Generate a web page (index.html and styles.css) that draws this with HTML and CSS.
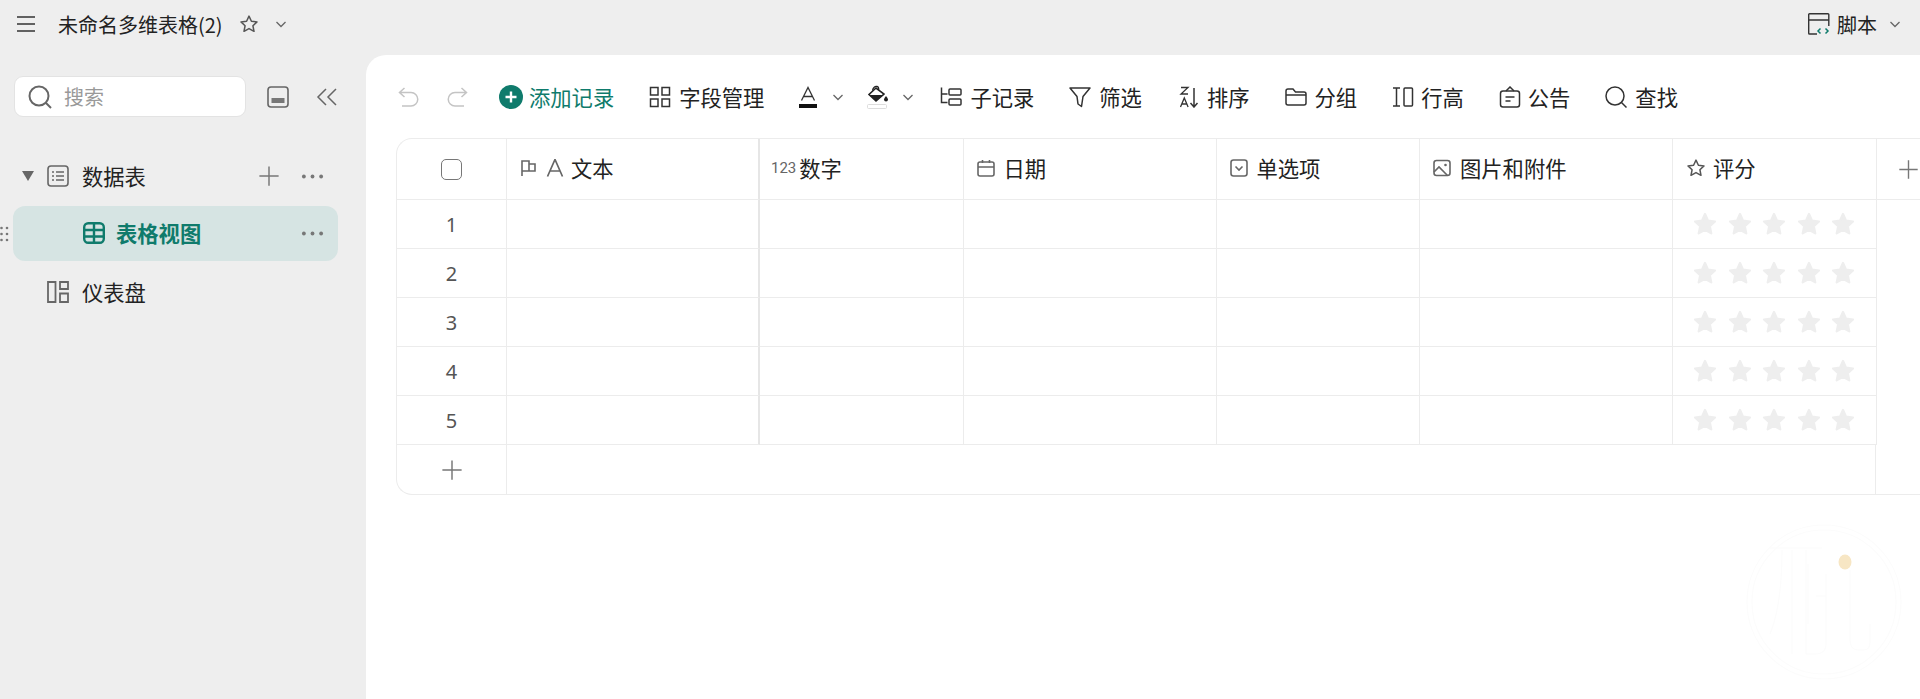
FILE: index.html
```html
<!DOCTYPE html>
<html lang="zh-CN">
<head>
<meta charset="utf-8">
<title>未命名多维表格(2)</title>
<link rel="stylesheet" href="styles.css">
</head>
<body>
<svg class="defs" width="0" height="0" aria-hidden="true">
  <symbol id="star" viewBox="0 0 24 24"><path d="M12 2l3 6.700 7 .8-5.200 4.800 1.500 7.100-6.300-3.600-6.300 3.600 1.500-7.100L2 9.500l7-.8z" fill="#eeeeee" stroke="#eeeeee" stroke-width="2.200" stroke-linejoin="round"/></symbol>
  <symbol id="chev" viewBox="0 0 12 12"><path d="M1.500 4l4.500 4.500L10.500 4" fill="none" stroke="#666" stroke-width="1.300"/></symbol>
  <symbol id="dots" viewBox="0 0 24 24"><circle cx="3" cy="12" r="2" fill="#777"/><circle cx="12" cy="12" r="2" fill="#777"/><circle cx="21" cy="12" r="2" fill="#777"/></symbol>
  <symbol id="plus" viewBox="0 0 24 24"><path d="M12 1.500v21M1.500 12h21" fill="none" stroke="#777" stroke-width="1.600"/></symbol>
  <symbol id="staro" viewBox="0 0 24 24"><path d="M12 2.500l2.900 6.200 6.700.8-4.900 4.600 1.300 6.700L12 17.500l-6 3.300 1.300-6.700-4.900-4.600 6.700-.8z" fill="none" stroke="#555" stroke-width="1.800" stroke-linejoin="round"/></symbol>
</svg>

<header class="topbar">
  <svg class="ic-menu" viewBox="0 0 18 16"><path d="M0 1h18M0 8h18M0 15h18" stroke="#333" stroke-width="1.500" fill="none"/></svg>
  <span class="doc-title">未命名多维表格(2)</span>
  <svg class="ic-star" viewBox="0 0 24 24"><use href="#staro"/></svg>
  <svg class="ic-chev top-chev" viewBox="0 0 12 12"><use href="#chev"/></svg>
  <div class="script">
    <svg class="ic-script" viewBox="0 0 22 22">
      <path d="M9 21H1.500a.8.8 0 0 1-.8-.8V1.500A.8.8 0 0 1 1.500.7h18.500a.8.8 0 0 1 .8.8V13M.7 7h20" fill="none" stroke="#333" stroke-width="1.400"/>
      <path d="M12.500 15.500L10 18l2.500 2.500M17.500 15.500L20 18l-2.500 2.500" fill="none" stroke="#0f7b6c" stroke-width="1.500"/>
    </svg>
    <span>脚本</span>
    <svg class="ic-chev" viewBox="0 0 12 12"><use href="#chev"/></svg>
  </div>
</header>

<div class="body">
  <aside class="sidebar">
    <div class="search-row">
      <div class="search">
        <svg class="ic-search" viewBox="0 0 24 24"><circle cx="11" cy="11" r="9.500" fill="none" stroke="#666" stroke-width="2"/><path d="M18 18l5 5" stroke="#666" stroke-width="2"/></svg>
        <span>搜索</span>
      </div>
      <svg class="ic-panel" viewBox="0 0 22 22"><rect x="1" y="1" width="20" height="20" rx="3" fill="none" stroke="#666" stroke-width="1.600"/><rect x="4.500" y="12" width="13" height="5" fill="#777"/></svg>
      <svg class="ic-collapse" viewBox="0 0 22 18"><path d="M10 1L2 9l8 8M20 1l-8 8 8 8" fill="none" stroke="#666" stroke-width="1.500"/></svg>
    </div>
    <nav class="tree">
      <div class="tree-row">
        <svg class="ic-caret" viewBox="0 0 12 10"><path d="M0 0h12L6 10z" fill="#666"/></svg>
        <svg class="ic-tree" viewBox="0 0 22 22"><rect x="1" y="1" width="20" height="20" rx="3" fill="none" stroke="#666" stroke-width="1.600"/><path d="M9 7h8M9 11h8M9 15h8M5 7h2M5 11h2M5 15h2" stroke="#666" stroke-width="1.600"/></svg>
        <span class="tree-label">数据表</span>
        <svg class="ic-plus" viewBox="0 0 24 24"><use href="#plus"/></svg>
        <svg class="ic-dots" viewBox="0 0 24 24"><use href="#dots"/></svg>
      </div>
      <div class="tree-row active">
        <svg class="handle" viewBox="0 0 9 16"><g fill="#777"><circle cx="1.500" cy="2" r="1.300"/><circle cx="7" cy="2" r="1.300"/><circle cx="1.500" cy="8" r="1.300"/><circle cx="7" cy="8" r="1.300"/><circle cx="1.500" cy="14" r="1.300"/><circle cx="7" cy="14" r="1.300"/></g></svg>
        <svg class="ic-tree" viewBox="0 0 22 22"><rect x="1.200" y="1.200" width="19.600" height="19.600" rx="4" fill="none" stroke="#0f7b6c" stroke-width="2.400"/><path d="M1 8h20M1 14.500h20M11 1v20" stroke="#0f7b6c" stroke-width="2.400"/></svg>
        <span class="tree-label">表格视图</span>
        <svg class="ic-dots" viewBox="0 0 24 24"><use href="#dots"/></svg>
      </div>
      <div class="tree-row plain">
        <svg class="ic-tree" viewBox="0 0 22 22"><path d="M1 1h7.500v20H1zM13 1h8v7h-8zM13 12.500h8V21h-8z" fill="none" stroke="#666" stroke-width="1.800"/></svg>
        <span class="tree-label">仪表盘</span>
      </div>
    </nav>
  </aside>

  <main class="main">
    <div class="toolbar">
      <div class="history">
        <svg class="ic-tool" viewBox="0 0 22 22"><path d="M6.500 2L1.500 6.500l5 4.500M2 6.500h11a6.500 6.500 0 0 1 0 13.500H4" fill="none" stroke="#c4c4c4" stroke-width="1.500"/></svg>
        <svg class="ic-tool" viewBox="0 0 22 22"><path d="M15.500 2l5 4.500-5 4.500M20 6.500H9A6.500 6.500 0 0 0 9 20h9" fill="none" stroke="#c4c4c4" stroke-width="1.500"/></svg>
      </div>
      <div class="tool add">
        <svg class="ic-add" viewBox="0 0 24 24"><circle cx="12" cy="12" r="12" fill="#0f7b6c"/><path d="M12 6.500v11M6.500 12h11" stroke="#fff" stroke-width="2.400"/></svg>
        <span>添加记录</span>
      </div>
      <div class="tool">
        <svg class="ic-tool" viewBox="0 0 22 22"><path d="M1.500 1.500h7.500V9H1.500zM13 1.500h7.500V9H13zM1.500 13H9v7.500H1.500zM13 13h7.500v7.500H13z" fill="none" stroke="#333" stroke-width="1.500"/></svg>
        <span>字段管理</span>
      </div>
      <div class="tool swatch first">
        <svg class="ic-tool" viewBox="0 0 22 22"><path d="M4.500 14.500L11 1.500l6.500 13M6.500 10.500h9" fill="none" stroke="#333" stroke-width="1.300"/><rect x="2" y="18" width="18" height="4" fill="#111"/></svg>
        <svg class="ic-chev" viewBox="0 0 12 12"><use href="#chev"/></svg>
      </div>
      <div class="tool swatch second">
        <svg class="ic-bucket" viewBox="0 0 22 24"><path d="M9 3l-7 6.500 7 6.500 8-7z" fill="none" stroke="#222" stroke-width="1.600"/><path d="M5.500 5.500C6 2.500 8 1 10 1.500c1.500.4 2 1.800 1.500 3.500" fill="none" stroke="#222" stroke-width="1.300"/><path d="M2.500 10h14L9 16z" fill="#222"/><path d="M19 11c1.500 2 2 2.800 2 3.600a2 2 0 0 1-4 0c0-.8.500-1.600 2-3.600z" fill="#222"/><rect x=".5" y="19.500" width="19" height="4" rx="1" fill="#fff" stroke="#ddd"/></svg>
        <svg class="ic-chev" viewBox="0 0 12 12"><use href="#chev"/></svg>
      </div>
      <div class="tool after-swatch">
        <svg class="ic-tool" viewBox="0 0 22 22"><path d="M1.500 1.500v15h6M1.500 8h6" fill="none" stroke="#333" stroke-width="1.500"/><rect x="9" y="3" width="12" height="6" rx="1" fill="none" stroke="#333" stroke-width="1.500"/><rect x="9" y="13" width="12" height="6" rx="1" fill="none" stroke="#333" stroke-width="1.500"/></svg>
        <span>子记录</span>
      </div>
      <div class="tool">
        <svg class="ic-tool" viewBox="0 0 22 22"><path d="M1 2h20l-7 8.500-1.500 10L9 18l-1-7.500z" fill="none" stroke="#333" stroke-width="1.500" stroke-linejoin="round"/></svg>
        <span>筛选</span>
      </div>
      <div class="tool sort">
        <svg class="ic-sort" viewBox="0 0 20 22"><path d="M2 1.500h7L2 8h7" fill="none" stroke="#333" stroke-width="1.300"/><path d="M1.500 21l3.800-9 3.800 9M3 18h5" fill="none" stroke="#333" stroke-width="1.300"/><path d="M15 2v19M11.500 17l3.500 4 3.500-4" fill="none" stroke="#333" stroke-width="1.500"/></svg>
        <span>排序</span>
      </div>
      <div class="tool">
        <svg class="ic-tool" viewBox="0 0 22 22"><path d="M1 5a2 2 0 0 1 2-2h5l2.500 3H19a2 2 0 0 1 2 2v9a2 2 0 0 1-2 2H3a2 2 0 0 1-2-2zM1 9h20" fill="none" stroke="#333" stroke-width="1.500"/></svg>
        <span>分组</span>
      </div>
      <div class="tool snug">
        <svg class="ic-tool" viewBox="0 0 22 22"><path d="M1 2h7M1 20h7M4.500 2v18" fill="none" stroke="#333" stroke-width="1.500"/><rect x="12" y="2" width="8.500" height="18" rx="1" fill="none" stroke="#333" stroke-width="1.500"/></svg>
        <span>行高</span>
      </div>
      <div class="tool snug">
        <svg class="ic-tool" viewBox="0 0 22 22"><rect x="1.500" y="5" width="19" height="16" rx="2.500" fill="none" stroke="#333" stroke-width="1.500"/><path d="M7 5l4-4 4 4M6.500 11h9M6.500 15h5" fill="none" stroke="#333" stroke-width="1.500"/></svg>
        <span>公告</span>
      </div>
      <div class="tool">
        <svg class="ic-tool" viewBox="0 0 22 22"><circle cx="10" cy="10" r="9" fill="none" stroke="#333" stroke-width="1.500"/><path d="M16.500 16.500l5 5" stroke="#333" stroke-width="1.500"/></svg>
        <span>查找</span>
      </div>
    </div>

    <div class="table">
      <div class="row head">
        <div class="cell idx"><span class="checkbox"></span></div>
        <div class="cell hcell frozen">
          <svg class="ic-field" viewBox="0 0 18 18"><path d="M2 17V2h7v3h6v7H9V2M9 5v7H2" fill="none" stroke="#666" stroke-width="1.600"/></svg>
          <svg class="ic-field" viewBox="0 0 18 18"><path d="M1.500 17.500L9 .5l7.500 17M4 12h10" fill="none" stroke="#666" stroke-width="1.700"/></svg>
          <span>文本</span>
        </div>
        <div class="cell hcell num"><span class="num-ic">123</span><span>数字</span></div>
        <div class="cell hcell">
          <svg class="ic-field" viewBox="0 0 18 18"><rect x="1" y="3" width="16" height="14" rx="2" fill="none" stroke="#666" stroke-width="1.600"/><path d="M1 8h16M5.500 1v3M12.500 1v3" stroke="#666" stroke-width="1.600"/></svg>
          <span>日期</span>
        </div>
        <div class="cell hcell">
          <svg class="ic-field" viewBox="0 0 18 18"><rect x="1" y="1" width="16" height="16" rx="2.500" fill="none" stroke="#666" stroke-width="1.600"/><path d="M5.500 7.500L9 11l3.500-3.500" fill="none" stroke="#666" stroke-width="1.600"/></svg>
          <span>单选项</span>
        </div>
        <div class="cell hcell">
          <svg class="ic-field" viewBox="0 0 18 18"><rect x="1" y="1.500" width="16" height="15" rx="2.500" fill="none" stroke="#666" stroke-width="1.600"/><path d="M1 13l5-5 8.500 8.500" fill="none" stroke="#666" stroke-width="1.600"/><circle cx="12.500" cy="6" r="1.300" fill="#666"/></svg>
          <span>图片和附件</span>
        </div>
        <div class="cell hcell rate">
          <svg class="ic-rate" viewBox="0 0 24 24"><use href="#staro"/></svg>
          <span>评分</span>
        </div>
        <div class="cell tail"><svg class="ic-plus-h" viewBox="0 0 24 24"><use href="#plus"/></svg></div>
      </div>

      <div class="row"><div class="cell idx">1</div><div class="cell frozen"></div><div class="cell"></div><div class="cell"></div><div class="cell"></div><div class="cell"></div><div class="cell stars"><svg viewBox="0 0 24 24"><use href="#star"/></svg><svg viewBox="0 0 24 24"><use href="#star"/></svg><svg viewBox="0 0 24 24"><use href="#star"/></svg><svg viewBox="0 0 24 24"><use href="#star"/></svg><svg viewBox="0 0 24 24"><use href="#star"/></svg></div></div>
      <div class="row"><div class="cell idx">2</div><div class="cell frozen"></div><div class="cell"></div><div class="cell"></div><div class="cell"></div><div class="cell"></div><div class="cell stars"><svg viewBox="0 0 24 24"><use href="#star"/></svg><svg viewBox="0 0 24 24"><use href="#star"/></svg><svg viewBox="0 0 24 24"><use href="#star"/></svg><svg viewBox="0 0 24 24"><use href="#star"/></svg><svg viewBox="0 0 24 24"><use href="#star"/></svg></div></div>
      <div class="row"><div class="cell idx">3</div><div class="cell frozen"></div><div class="cell"></div><div class="cell"></div><div class="cell"></div><div class="cell"></div><div class="cell stars"><svg viewBox="0 0 24 24"><use href="#star"/></svg><svg viewBox="0 0 24 24"><use href="#star"/></svg><svg viewBox="0 0 24 24"><use href="#star"/></svg><svg viewBox="0 0 24 24"><use href="#star"/></svg><svg viewBox="0 0 24 24"><use href="#star"/></svg></div></div>
      <div class="row"><div class="cell idx">4</div><div class="cell frozen"></div><div class="cell"></div><div class="cell"></div><div class="cell"></div><div class="cell"></div><div class="cell stars"><svg viewBox="0 0 24 24"><use href="#star"/></svg><svg viewBox="0 0 24 24"><use href="#star"/></svg><svg viewBox="0 0 24 24"><use href="#star"/></svg><svg viewBox="0 0 24 24"><use href="#star"/></svg><svg viewBox="0 0 24 24"><use href="#star"/></svg></div></div>
      <div class="row"><div class="cell idx">5</div><div class="cell frozen"></div><div class="cell"></div><div class="cell"></div><div class="cell"></div><div class="cell"></div><div class="cell stars"><svg viewBox="0 0 24 24"><use href="#star"/></svg><svg viewBox="0 0 24 24"><use href="#star"/></svg><svg viewBox="0 0 24 24"><use href="#star"/></svg><svg viewBox="0 0 24 24"><use href="#star"/></svg><svg viewBox="0 0 24 24"><use href="#star"/></svg></div></div>

      <div class="row foot">
        <div class="cell idx"><svg class="ic-plus-f" viewBox="0 0 24 24"><use href="#plus"/></svg></div>
        <div class="cell fill"></div>
        <div class="cell tail"></div>
      </div>
    </div>

    <svg class="watermark" viewBox="0 0 156 156" aria-hidden="true">
      <g fill="none" stroke="#fcfcfc" stroke-width="1.200">
        <circle cx="78" cy="78" r="77"/>
        <circle cx="78" cy="78" r="72"/>
        <path d="M24 24h52M36 26c0 30-2 60-12 84M46 26v104M60 26v104M62 40v60M80 50v70c0 8-6 10-10 10H60M70 72h10M104 46v70c0 6 3 10 8 10h6c4 0 6-3 6-8v-18"/>
      </g>
      <ellipse cx="99" cy="38" rx="6.500" ry="7.500" fill="#f7e6c4"/>
    </svg>
  </main>
</div>
</body>
</html>
```

FILE: styles.css
```css
* { box-sizing: border-box; }

html, body {
  margin: 0;
  height: 699px;
  overflow: hidden;
}

body {
  background: #eeeeee;
  color: #222222;
  font-family: "Noto Sans CJK SC", "Noto Sans", sans-serif;
  font-size: 21.3px;
  display: flex;
  flex-direction: column;
}

svg { display: block; flex: none; }
.defs { position: absolute; }

/* top bar */
.topbar {
  height: 55px;
  flex: none;
  display: flex;
  align-items: center;
  padding: 0 19px 7px 17px;
}
.ic-menu { width: 18px; height: 16px; }
.doc-title { margin-left: 23px; font-size: 20px; }
.ic-star { width: 20px; height: 20px; margin-left: 16px; }
.ic-chev { width: 12px; height: 12px; }
.top-chev { margin-left: 16px; }
.script {
  margin-left: auto;
  display: flex;
  align-items: center;
  gap: 7px;
}
.script span { font-size: 20px; }
.script .ic-chev { margin-left: 5px; }
.ic-script { width: 22px; height: 22px; }

/* layout */
.body {
  flex: 1;
  display: flex;
  min-height: 0;
}
.sidebar { width: 366px; flex: none; padding-top: 21px; }

/* search */
.search-row {
  display: flex;
  align-items: center;
  padding-left: 14px;
}
.search {
  width: 232px;
  height: 41px;
  background: #ffffff;
  border: 1px solid #e3e3e3;
  border-radius: 9px;
  display: flex;
  align-items: center;
  gap: 12px;
  padding-left: 13px;
  color: #999999;
  font-size: 20px;
}
.ic-search { width: 24px; height: 24px; }
.ic-panel { width: 22px; height: 22px; margin-left: 21px; }
.ic-collapse { width: 22px; height: 18px; margin-left: 27px; }

/* tree */
.tree { margin-top: 31.500px; }
.tree-row {
  width: 325px;
  height: 55px;
  margin-left: 13px;
  display: flex;
  align-items: center;
  position: relative;
  border-radius: 12px;
}
.tree-row:first-child { padding-left: 9px; }
.tree-row.active {
  margin-top: 2px;
  background: #d6e4e3;
  color: #0f7b6c;
  font-weight: 700;
  padding-left: 70px;
}
.tree-row.plain { margin-top: 4px; padding-left: 34px; }
.ic-caret { width: 12px; height: 10px; margin-right: 13px; }
.ic-tree { width: 22px; height: 22px; }
.tree-label { margin-left: 13px; padding-bottom: 2px; }
.active .tree-label { margin-left: 11px; }
.ic-plus { width: 22px; height: 22px; margin-left: auto; }
.ic-dots { width: 23px; height: 23px; margin-left: 21px; margin-right: 14px; }
.active .ic-dots { margin-left: auto; }
.handle {
  position: absolute;
  left: -13px;
  top: 20px;
  width: 9px;
  height: 16px;
}

/* main */
.main {
  flex: 1;
  min-width: 0;
  background: #ffffff;
  border-radius: 20px 0 0 0;
  position: relative;
  overflow: hidden;
}

/* toolbar */
.toolbar {
  height: 83px;
  display: flex;
  align-items: center;
  padding-left: 32px;
  gap: 35px;
}
.history { display: flex; gap: 26px; }
.ic-tool { width: 22px; height: 22px; }
.ic-bucket { width: 22px; height: 24px; }
.tool {
  display: flex;
  align-items: center;
  gap: 8px;
  white-space: nowrap;
}
.tool.add { color: #0f7b6c; gap: 6px; margin-left: -4px; }
.ic-add { width: 24px; height: 24px; }
.tool.swatch { gap: 13px; }
.tool.first { margin-left: -2px; }
.tool.second { margin-left: -12px; }
.tool.after-swatch { margin-left: -9px; }
.tool.sort { margin-left: 2px; }
.tool.snug { gap: 7px; }
.ic-sort { width: 20px; height: 22px; }

/* table */
.table {
  margin-left: 30px;
  border: 1px solid #ececec;
  border-right: 0;
  border-radius: 16px 0 0 16px;
  overflow: hidden;
}
.row {
  display: grid;
  grid-template-columns: 110px 253px 203.500px 253px 203.500px 253px 203.500px 1fr;
  height: 49px;
}
.row.head { height: 61px; }
.row.foot { grid-template-columns: 110px 1369px 1fr; }
.cell {
  border-right: 1px solid #ececec;
  border-bottom: 1px solid #ececec;
  display: flex;
  align-items: center;
}
.cell.frozen { border-right: 2px solid #e6e6e6; }
.row > .tail { border-right: 0; }
.row.foot .cell { border-bottom: 0; }
.idx {
  justify-content: center;
  color: #555555;
  font-family: "Noto Sans", sans-serif;
  font-size: 20px;
}
.checkbox {
  width: 21px;
  height: 21px;
  border: 1.500px solid #777777;
  border-radius: 5px;
}
.hcell { padding-left: 13px; padding-bottom: 3px; gap: 9px; }
.hcell.frozen { gap: 7.500px; }
.hcell.num { padding-left: 11px; gap: 3px; }
.hcell.rate { gap: 7px; }
.ic-field { width: 18px; height: 18px; }
.ic-rate { width: 20px; height: 20px; }
.num-ic { font-size: 15px; color: #666666; font-family: "Roboto", sans-serif; }
.tail { padding-left: 21px; }
.ic-plus-h { width: 21px; height: 21px; }
.ic-plus-f { width: 22px; height: 22px; }
.stars { justify-content: center; gap: 10.400px; }
.stars svg { width: 24px; height: 24px; }

/* watermark */
.watermark {
  position: absolute;
  right: 18px;
  bottom: 19px;
  width: 156px;
  height: 156px;
}
```
